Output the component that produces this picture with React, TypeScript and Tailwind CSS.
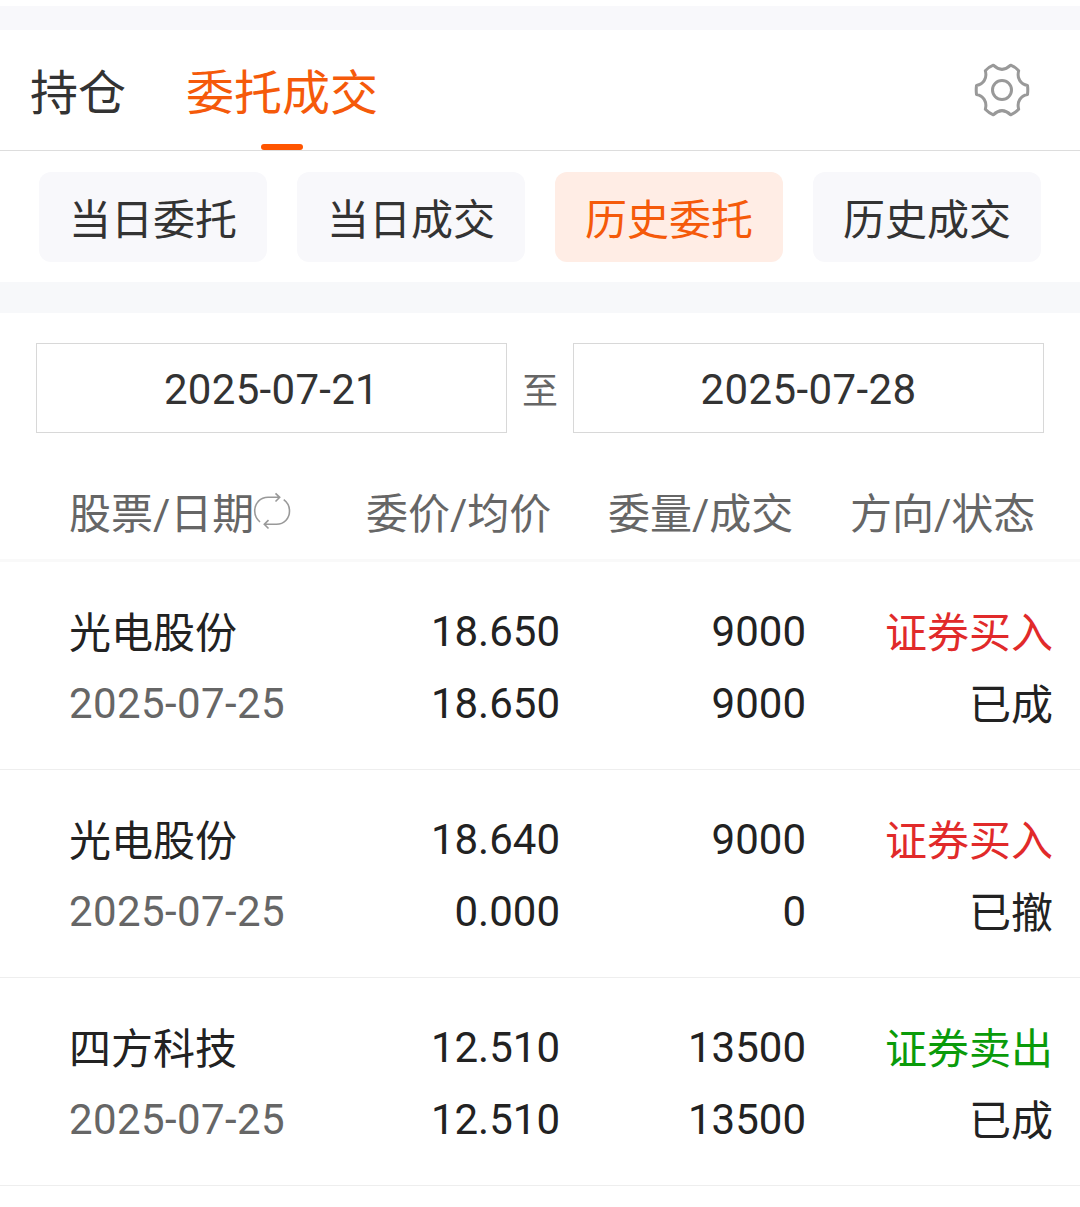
import clsx from 'clsx';

const filters = ['当日委托', '当日成交', '历史委托', '历史成交'];

const orders = [
  { name: '光电股份', date: '2025-07-25', price: '18.650', avg: '18.650', qty: '9000', filled: '9000', side: '证券买入', status: '已成', sell: false },
  { name: '光电股份', date: '2025-07-25', price: '18.640', avg: '0.000', qty: '9000', filled: '0', side: '证券买入', status: '已撤', sell: false },
  { name: '四方科技', date: '2025-07-25', price: '12.510', avg: '12.510', qty: '13500', filled: '13500', side: '证券卖出', status: '已成', sell: true },
];

function GearIcon() {
  return (
    <svg width="56" height="56" viewBox="0 0 56 56" fill="none" stroke="#999999" strokeWidth="3" strokeLinejoin="round">
      <path d="M19.3 3.2 Q28 11.4 36.7 3.2 Q41.2 5 44.7 8.7 C42.6 16 46.5 22.2 53.5 23.5 Q54.1 28 53.5 32.5 C46.5 33.8 42.6 40 44.7 47.3 Q41.2 51 36.7 52.8 Q28 44.6 19.3 52.8 Q14.8 51 11.3 47.3 C13.4 40 9.5 33.8 2.5 32.5 Q1.9 28 2.5 23.5 C9.5 22.2 13.4 16 11.3 8.7 Q14.8 5 19.3 3.2Z" />
      <circle cx="28" cy="28" r="9.5" />
    </svg>
  );
}

function SwapIcon() {
  return (
    <svg className="-ml-px mb-2" width="38" height="38" viewBox="0 0 38 38" fill="none" stroke="#999999" strokeWidth="1.6">
      <path d="M7 30 C3.5 27 1.7 23 1.7 19 C1.7 11 7.5 5.3 15 5.3 H26.7 M22.5 1.3 L26.7 5.3 L22.5 9.5" />
      <path d="M30.7 7.7 C34.5 10.5 36.5 14.5 36.5 19 C36.5 26.5 31 32.3 23.5 32.3 H11.5 M15.5 28.1 L11.3 32.3 L15.5 36.5" />
    </svg>
  );
}

export default function App() {
  return (
    <div className="h-[1207px] w-[1080px] overflow-hidden bg-white font-[Roboto,'Noto_Sans_CJK_SC',sans-serif] text-[42px] text-[#333333]">
      <div className="mt-1.5 h-6 bg-[#f8f8fb]" />
      <header className="flex h-[121px] border-b border-[#dddddd] pl-[30px] pr-[50px] text-[48px] leading-[127px]">
        <div className="mr-[60px]">持仓</div>
        <div className="relative text-[#f55a0a]">
          委托成交
          <span className="absolute bottom-0 left-[75px] h-1.5 w-[42px] rounded-full bg-[#ff5500]" />
        </div>
        <div className="ml-auto mt-8"><GearIcon /></div>
      </header>
      <nav className="flex h-[131px] gap-[30px] px-[39px] pt-[21px]">
        {filters.map((label) => (
          <button
            key={label}
            className={clsx(
              'h-[90px] w-[228px] rounded-xl pt-[7px]',
              label === '历史委托' ? 'bg-[#ffede5] text-[#f55a0a]' : 'bg-[#f8f8fb]'
            )}
          >
            {label}
          </button>
        ))}
      </nav>
      <div className="h-[31px] bg-[#f7f8fa]" />
      <div className="mt-[30px] flex h-[90px] px-9 text-center leading-[90px]">
        <div className="h-[90px] w-[471px] border border-[#d8d8d8] leading-[92px] tracking-[0.3px]">2025-07-21</div>
        <div className="flex-1 text-[36px] leading-[98px] text-[#666666]">至</div>
        <div className="h-[90px] w-[471px] border border-[#d8d8d8] leading-[92px] tracking-[0.4px]">2025-07-28</div>
      </div>
      <div className="flex h-[129px] border-b-[3px] border-[#f9f9f9] pl-[69px] pt-[37px] leading-[90px] text-[#666666]">
        <div className="flex h-[90px] w-[297px] items-center"><span>股票/日期</span><SwapIcon /></div>
        <div className="w-[242px]">委价/均价</div>
        <div className="w-[242px]">委量/成交</div>
        <div>方向/状态</div>
      </div>
      {orders.map((o, i) => (
        <div key={i} className="grid h-52 grid-cols-[300px_191px_246px_247px] border-b border-[#eeeeee] pl-[69px] pt-[34px] leading-[72px] text-[#222222]">
          <div>
            <div className="h-[72px] leading-[76px]">{o.name}</div>
            <div className="tracking-[0.4px] text-[#666666]">{o.date}</div>
          </div>
          <div className="text-right">
            <div>{o.price}</div>
            <div>{o.avg}</div>
          </div>
          <div className="text-right">
            <div>{o.qty}</div>
            <div>{o.filled}</div>
          </div>
          <div className="pt-0.5 text-right">
            <div className={o.sell ? 'text-[#0a9b0a]' : 'text-[#e12a2a]'}>{o.side}</div>
            <div>{o.status}</div>
          </div>
        </div>
      ))}
    </div>
  );
}
